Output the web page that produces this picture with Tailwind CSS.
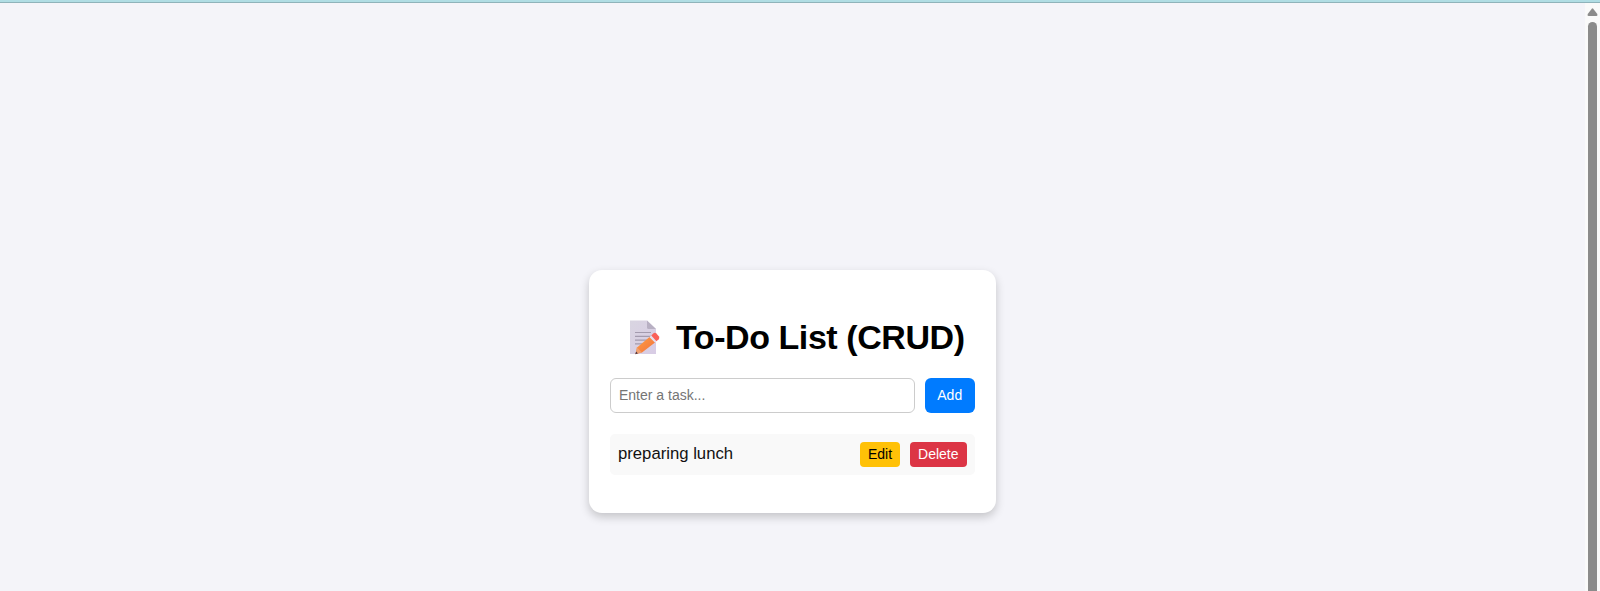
<!DOCTYPE html>
<html lang="en">
<head>
<meta charset="utf-8">
<title>To-Do List</title>
<script src="https://cdn.jsdelivr.net/npm/@tailwindcss/browser@4"></script>
</head>
<body class="h-[591px] overflow-hidden bg-[#f4f4f9] font-['Liberation_Sans',Arial,sans-serif] text-black flex flex-col">
<div class="h-[3px] shrink-0 bg-[#b0dde4] border-b border-[#8fb3ba] box-border"></div>
<div class="flex flex-1 min-h-0">
  <main class="flex-1 pl-[589px] pt-[266.500px]">
    <section class="w-[406.500px] h-[243.500px] rounded-[13px] bg-white px-[21px] shadow-[0_4px_10px_rgba(0,0,0,0.2)]">
      <h1 class="flex items-center h-[41px] pt-[47px] pl-[20px] box-content text-[34px] font-bold whitespace-nowrap tracking-[-0.430px]">
        <svg class="w-[30px] h-[35px] mr-[16px] shrink-0" viewBox="0 0 30 35">
          <defs>
            <linearGradient id="page" x1="0" y1="0" x2="1" y2="1"><stop offset="0" stop-color="#d9d5e1"/><stop offset="1" stop-color="#d8cce5"/></linearGradient>
            <linearGradient id="wood" x1="0" y1="0" x2="1" y2="1"><stop offset="0" stop-color="#ffa045"/><stop offset="1" stop-color="#f2703c"/></linearGradient>
          </defs>
          <path d="M0 .5H17L26 9V34H0Z" fill="url(#page)"/>
          <path d="M17 .5L26 9H18.500Q17 9 17 7.500Z" fill="#b8b0c3"/>
          <path d="M5 12.500H21M5 16.300H21M5 20.100H18M5 23.900H14" stroke="#a39bae" stroke-width="1.200"/>
          <path d="M7 27.500L19.500 17L25 22.500L12 32.500L5.500 34Z" fill="url(#wood)"/>
          <path d="M7 27.500L12 32.500L5.500 34Z" fill="#f0a070"/>
          <path d="M6.200 31.600L7.900 33.400L5.200 34.200Z" fill="#4b3540"/>
          <path d="M19.500 17L21.300 15.400L26.500 21.200L25 22.500Z" fill="#e8dfec"/>
          <path d="M21.300 15.400L23.500 13.300Q25 12.200 26.400 13.500L29 16.400Q29.800 17.900 28.700 19.300L26.500 21.200Z" fill="#fa6058"/>
        </svg>
        <span>To-Do List (CRUD)</span>
      </h1>
      <div class="flex gap-[10px] mt-[20.500px] h-[35px]">
        <input type="text" placeholder="Enter a task..." class="w-[305px] h-[35px] rounded-[6px] border border-[#cccccc] px-[8px] pb-[2px] text-[14px] placeholder:text-[#757575] outline-none">
        <button class="w-[49.500px] h-[35px] rounded-[6px] bg-[#007bff] pb-px text-[14px] text-white">Add</button>
      </div>
      <ul class="mt-[20.500px]">
        <li class="flex items-center w-[364.500px] h-[41.500px] rounded-[5px] bg-[#f9f9f9] px-[8px]">
          <span class="flex-1 text-[16.700px] pb-px text-[#111111]">preparing lunch</span>
          <button class="w-[40px] h-[25px] rounded-[4px] bg-[#ffc107] text-[14px] mr-[10px]">Edit</button>
          <button class="w-[56.500px] h-[25px] rounded-[4px] bg-[#dc3545] text-[14px] text-white">Delete</button>
        </li>
      </ul>
    </section>
  </main>
  <aside class="w-[15px] bg-[#fafafa] flex flex-col items-center">
    <svg class="w-[11px] h-[8px] mt-[5px] mb-[6px] shrink-0" viewBox="0 0 11 8"><path d="M4.800 .700Q5.500 0 6.200 .700L10.300 6Q11 8 9.500 8H1.500Q0 8 .7 6Z" fill="#8b8b8b"/></svg>
    <div class="w-[9px] flex-1 rounded-t-[5px] bg-[#8b8b8b]"></div>
  </aside>
</div>
</body>
</html>
